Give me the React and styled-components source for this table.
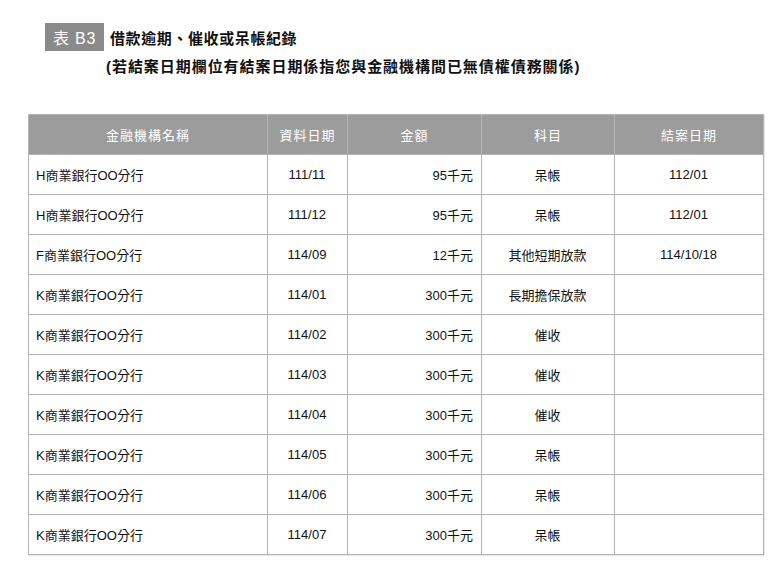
import React from "react"
import styled, { createGlobalStyle } from "styled-components"

const GlobalStyle = createGlobalStyle`
  body {
    margin: 0;
    background: #ffffff;
    font-family: "Liberation Sans", Arial, "Noto Sans CJK TC", sans-serif;
    color: #111;
  }
`

const rows = [
  { bank: "H商業銀行OO分行", date: "111/11", amount: "95千元", item: "呆帳", closed: "112/01" },
  { bank: "H商業銀行OO分行", date: "111/12", amount: "95千元", item: "呆帳", closed: "112/01" },
  { bank: "F商業銀行OO分行", date: "114/09", amount: "12千元", item: "其他短期放款", closed: "114/10/18" },
  { bank: "K商業銀行OO分行", date: "114/01", amount: "300千元", item: "長期擔保放款", closed: "" },
  { bank: "K商業銀行OO分行", date: "114/02", amount: "300千元", item: "催收", closed: "" },
  { bank: "K商業銀行OO分行", date: "114/03", amount: "300千元", item: "催收", closed: "" },
  { bank: "K商業銀行OO分行", date: "114/04", amount: "300千元", item: "催收", closed: "" },
  { bank: "K商業銀行OO分行", date: "114/05", amount: "300千元", item: "呆帳", closed: "" },
  { bank: "K商業銀行OO分行", date: "114/06", amount: "300千元", item: "呆帳", closed: "" },
  { bank: "K商業銀行OO分行", date: "114/07", amount: "300千元", item: "呆帳", closed: "" },
]

export default function App() {
  return (
    <Page>
      <GlobalStyle />
      <TitleBlock>
        <TitleRow>
          <Badge>表 B3</Badge>
          <Title>借款逾期、催收或呆帳紀錄</Title>
        </TitleRow>
        <Note>(若結案日期欄位有結案日期係指您與金融機構間已無債權債務關係)</Note>
      </TitleBlock>
      <Table>
        <colgroup>
          <col style={{ width: 239 }} />
          <col style={{ width: 80 }} />
          <col style={{ width: 134 }} />
          <col style={{ width: 133 }} />
          <col style={{ width: 149 }} />
        </colgroup>
        <thead>
          <tr>
            <Th>金融機構名稱</Th>
            <Th>資料日期</Th>
            <Th>金額</Th>
            <Th>科目</Th>
            <Th>結案日期</Th>
          </tr>
        </thead>
        <tbody>
          {rows.map((r, i) => (
            <tr key={i}>
              <Td $align="left">{r.bank}</Td>
              <Td>{r.date}</Td>
              <Td $align="right">{r.amount}</Td>
              <Td>{r.item}</Td>
              <Td>{r.closed}</Td>
            </tr>
          ))}
        </tbody>
      </Table>
    </Page>
  )
}

const Page = styled.div`
  width: 775px;
  height: 563px;
  overflow: hidden;
  padding-top: 23px;
  box-sizing: border-box;
`

const TitleBlock = styled.div`
  padding-left: 45px;
  height: 91px;
`

const TitleRow = styled.div`
  display: flex;
  align-items: center;
  gap: 6px;
`

const Badge = styled.div`
  width: 59px;
  height: 28px;
  background: #8a8a8a;
  color: #ffffff;
  font-size: 16px;
  display: flex;
  align-items: center;
  justify-content: center;
  letter-spacing: 0.8px;
`

const Title = styled.div`
  font-size: 15px;
  font-weight: 700;
  letter-spacing: 0.6px;
  color: #111;
`

const Note = styled.div`
  margin-top: 4px;
  padding-left: 61px;
  font-size: 15px;
  font-weight: 700;
  letter-spacing: 0.95px;
  line-height: 24px;
  color: #111;
`

const Table = styled.table`
  margin-left: 28px;
  width: 736px;
  border-collapse: collapse;
  table-layout: fixed;
  box-shadow: 1px 1px 0 #e6e6e6;
`

const Th = styled.th`
  height: 39px;
  padding: 0;
  background: #9c9c9c;
  color: #ffffff;
  font-size: 13px;
  font-weight: 400;
  letter-spacing: 1px;
  border: 1px solid #b4b4b4;
  text-align: center;
`

const Td = styled.td`
  height: 39px;
  padding: 0 8px 0 7px;
  font-size: 13px;
  color: #111;
  border: 1px solid #b4b4b4;
  text-align: ${(p) => p.$align || "center"};
`
